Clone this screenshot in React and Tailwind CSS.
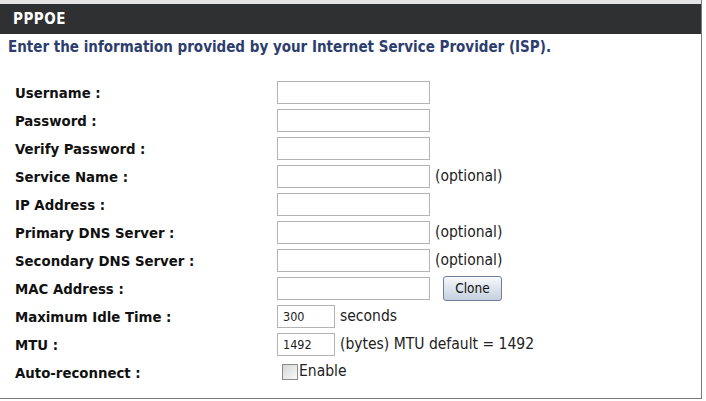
import React from 'react';

const font = { fontFamily: '"DejaVu Sans Condensed", "DejaVu Sans", Tahoma, sans-serif' };

// form rows: label, field type, trailing text
const rows = [
  { label: 'Username :', kind: 'wide' },
  { label: 'Password :', kind: 'wide' },
  { label: 'Verify Password :', kind: 'wide' },
  { label: 'Service Name :', kind: 'wide', note: '(optional)' },
  { label: 'IP Address :', kind: 'wide' },
  { label: 'Primary DNS Server :', kind: 'wide', note: '(optional)' },
  { label: 'Secondary DNS Server :', kind: 'wide', note: '(optional)' },
  { label: 'MAC Address :', kind: 'wide', clone: true },
  { label: 'Maximum Idle Time :', kind: 'small', value: '300', note: 'seconds' },
  { label: 'MTU :', kind: 'small', value: '1492', note: '(bytes) MTU default = 1492' },
  { label: 'Auto-reconnect :', kind: 'check' },
];

const Field = ({ row }) => {
  if (row.kind === 'check') {
    return (
      <label className="flex items-center text-[15.5px] text-[#222] pl-[5px]">
        <span className="w-[16px] h-[16px] border border-[#8a8a8a] bg-gradient-to-br from-[#d6d6d6] to-[#fafafa] inline-block" />
        <span className="ml-[1px] leading-none">Enable</span>
      </label>
    );
  }
  return (
    <div className="flex items-center">
      <input
        readOnly
        value={row.value || ''}
        className={`${row.kind === 'wide' ? 'w-[153px]' : 'w-[58px]'} h-[23px] border border-[#b4b4b4] bg-white px-[5px] text-[12.5px] text-[#222] outline-none`}
        style={font}
      />
      {row.note && <span className="ml-[5px] pt-[1px] text-[15.5px] text-[#222]">{row.note}</span>}
      {row.clone && (
        <button
          className="ml-[13px] w-[59px] h-[25px] rounded-[3px] border border-[#6f7f99] bg-gradient-to-b from-[#f7f9fc] to-[#c5cfdd] text-[13.5px] text-[#111]"
          style={font}
        >
          Clone
        </button>
      )}
    </div>
  );
};

export default function App() {
  return (
    <div className="w-[706px] h-[401px] bg-white overflow-hidden" style={font}>
      <div className="w-[702px] h-[399px] border-r border-b border-[#7a7a7a] flex flex-col">
        <div className="h-[4px] bg-[#e4e4e4]" />
        <div className="h-[30px] bg-[#2f3032] flex items-center pl-[13px] text-white font-bold text-[15px] tracking-[0.5px]">
          PPPOE
        </div>
        <div className="pl-[8px] pt-[3px] h-[44px] leading-[20px] text-[15px] font-bold text-[#2d3e6e]">
          Enter the information provided by your Internet Service Provider (ISP).
        </div>
        <div className="flex flex-col">
          {rows.map((row) => (
            <div key={row.label} className="flex items-center h-[28px]">
              <div className="w-[277px] pl-[15px] pt-[2px] text-[14.8px] font-bold text-[#111]">{row.label}</div>
              <Field row={row} />
            </div>
          ))}
        </div>
      </div>
    </div>
  );
}
